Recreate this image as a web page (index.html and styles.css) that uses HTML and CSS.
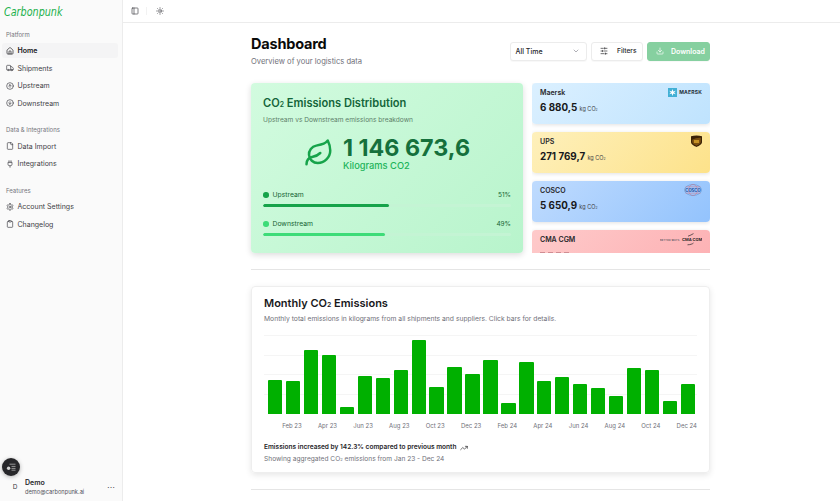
FILE: index.html
```html
<!DOCTYPE html>
<html lang="en">
<head>
    <meta charset="UTF-8">
    <meta name="viewport" content="width=device-width, initial-scale=1.0">
    <title>Carbonpunk Dashboard</title>
    <link rel="stylesheet" href="styles.css">
</head>
<body>
    <svg class="sprite" width="0" height="0">
        <symbol id="i-home" viewBox="0 0 24 24"><path d="M15 21v-8a1 1 0 0 0-1-1h-4a1 1 0 0 0-1 1v8"/><path d="M3 10a2 2 0 0 1 .709-1.528l7-5.999a2 2 0 0 1 2.582 0l7 5.999A2 2 0 0 1 21 10v9a2 2 0 0 1-2 2H5a2 2 0 0 1-2-2z"/></symbol>
        <symbol id="i-truck" viewBox="0 0 24 24"><path d="M14 18V6a2 2 0 0 0-2-2H4a2 2 0 0 0-2 2v11a1 1 0 0 0 1 1h2"/><path d="M15 18H9"/><path d="M19 18h2a1 1 0 0 0 1-1v-3.65a1 1 0 0 0-.22-.624l-3.48-4.35A1 1 0 0 0 17.52 8H14"/><circle cx="17" cy="18" r="2"/><circle cx="7" cy="18" r="2"/></symbol>
        <symbol id="i-up" viewBox="0 0 24 24"><circle cx="12" cy="12" r="10"/><path d="m16 12-4-4-4 4"/><path d="M12 16V8"/></symbol>
        <symbol id="i-down" viewBox="0 0 24 24"><circle cx="12" cy="12" r="10"/><path d="m8 12 4 4 4-4"/><path d="M12 8v8"/></symbol>
        <symbol id="i-file" viewBox="0 0 24 24"><path d="M15 2H6a2 2 0 0 0-2 2v16a2 2 0 0 0 2 2h12a2 2 0 0 0 2-2V7Z"/><path d="M14 2v4a2 2 0 0 0 2 2h4"/></symbol>
        <symbol id="i-plug" viewBox="0 0 24 24"><path d="M12 22v-5"/><path d="M9 8V2"/><path d="M15 8V2"/><path d="M18 8v5a4 4 0 0 1-4 4h-4a4 4 0 0 1-4-4V8Z"/></symbol>
        <symbol id="i-settings" viewBox="0 0 24 24"><path d="M12.22 2h-.44a2 2 0 0 0-2 2v.18a2 2 0 0 1-1 1.73l-.43.25a2 2 0 0 1-2 0l-.15-.08a2 2 0 0 0-2.73.73l-.22.38a2 2 0 0 0 .73 2.73l.15.1a2 2 0 0 1 1 1.72v.51a2 2 0 0 1-1 1.74l-.15.09a2 2 0 0 0-.73 2.73l.22.38a2 2 0 0 0 2.73.73l.15-.08a2 2 0 0 1 2 0l.43.25a2 2 0 0 1 1 1.73V20a2 2 0 0 0 2 2h.44a2 2 0 0 0 2-2v-.18a2 2 0 0 1 1-1.73l.43-.25a2 2 0 0 1 2 0l.15.08a2 2 0 0 0 2.73-.73l.22-.39a2 2 0 0 0-.73-2.73l-.15-.08a2 2 0 0 1-1-1.74v-.5a2 2 0 0 1 1-1.74l.15-.09a2 2 0 0 0 .73-2.73l-.22-.38a2 2 0 0 0-2.73-.73l-.15.08a2 2 0 0 1-2 0l-.43-.25a2 2 0 0 1-1-1.73V4a2 2 0 0 0-2-2z"/><circle cx="12" cy="12" r="3"/></symbol>
        <symbol id="i-clipboard" viewBox="0 0 24 24"><rect x="8" y="2" width="8" height="4" rx="1"/><path d="M16 4h2a2 2 0 0 1 2 2v14a2 2 0 0 1-2 2H6a2 2 0 0 1-2-2V6a2 2 0 0 1 2-2h2"/></symbol>
        <symbol id="i-panel" viewBox="0 0 24 24"><rect x="3" y="3" width="18" height="18" rx="2"/><path d="M9 3v18"/></symbol>
        <symbol id="i-sun" viewBox="0 0 24 24"><circle cx="12" cy="12" r="4"/><path d="M12 2v2M12 20v2M4.93 4.93l1.41 1.41M17.66 17.66l1.41 1.41M2 12h2M20 12h2M6.34 17.66l-1.41 1.41M19.07 4.93l-1.41 1.41"/></symbol>
        <symbol id="i-sliders" viewBox="0 0 24 24"><path d="M21 4h-7M10 4H3M21 12h-9M8 12H3M21 20h-5M12 20H3M14 2v4M8 10v4M16 18v4"/></symbol>
        <symbol id="i-download" viewBox="0 0 24 24"><path d="M21 15v4a2 2 0 0 1-2 2H5a2 2 0 0 1-2-2v-4"/><path d="m7 10 5 5 5-5"/><path d="M12 15V3"/></symbol>
        <symbol id="i-chevron" viewBox="0 0 24 24"><path d="m6 9 6 6 6-6"/></symbol>
        <symbol id="i-leaf" viewBox="0 0 24 24"><path d="M11 20A7 7 0 0 1 9.8 6.1C15.5 5 17 4.48 19 2c1 2 2 4.18 2 8 0 5.5-4.78 10-10 10Z"/><path d="M2 21c0-3 1.85-5.36 5.08-6C9.5 14.52 12 13 13 12"/></symbol>
        <symbol id="i-trend" viewBox="0 0 24 24"><path d="M22 7l-8.5 8.5-5-5L2 17"/><path d="M16 7h6v6"/></symbol>
    </svg>

    <div class="app">
        <aside class="sidebar">
            <div class="logo"><span>Carbonpunk</span></div>

            <div class="nav-label">Platform</div>
            <a class="nav-item active"><svg class="icon"><use href="#i-home"/></svg>Home</a>
            <a class="nav-item"><svg class="icon"><use href="#i-truck"/></svg>Shipments</a>
            <a class="nav-item"><svg class="icon"><use href="#i-up"/></svg>Upstream</a>
            <a class="nav-item"><svg class="icon"><use href="#i-down"/></svg>Downstream</a>

            <div class="nav-label spaced">Data &amp; Integrations</div>
            <a class="nav-item"><svg class="icon"><use href="#i-file"/></svg>Data Import</a>
            <a class="nav-item"><svg class="icon"><use href="#i-plug"/></svg>Integrations</a>

            <div class="nav-label spaced">Features</div>
            <a class="nav-item"><svg class="icon"><use href="#i-settings"/></svg>Account Settings</a>
            <a class="nav-item"><svg class="icon"><use href="#i-clipboard"/></svg>Changelog</a>

            <div class="user">
                <div class="avatar">D</div>
                <div class="user-info">
                    <div class="user-name">Demo</div>
                    <div class="user-mail">demo@carbonpunk.ai</div>
                </div>
                <div class="user-more">&#8943;</div>
            </div>
        </aside>

        <div class="float-btn">
            <svg width="10" height="8" viewBox="0 0 10 8"><circle cx="2.6" cy="5.2" r="1.7" fill="#d4d4d4"/><path d="M3.5 1.2h6M5.5 3.4h4M5.5 5.4h4M5.5 7.2h4" stroke="#a3a3a3" stroke-width="0.9"/></svg>
        </div>

        <div class="content">
            <header class="topbar">
                <svg class="icon top-icon"><use href="#i-panel"/></svg>
                <span class="top-sep"></span>
                <svg class="icon top-icon"><use href="#i-sun"/></svg>
            </header>

            <main class="main">
                <div class="page-head">
                    <div>
                        <h1>Dashboard</h1>
                        <p class="page-sub">Overview of your logistics data</p>
                    </div>
                    <div class="actions">
                        <div class="btn select">All Time<svg class="icon chevron"><use href="#i-chevron"/></svg></div>
                        <div class="btn filters"><svg class="icon"><use href="#i-sliders"/></svg>Filters</div>
                        <div class="btn download"><svg class="icon"><use href="#i-download"/></svg>Download</div>
                    </div>
                </div>

                <section class="summary">
                    <div class="dist-card">
                        <h2>CO<sub>2</sub> Emissions Distribution</h2>
                        <p class="dist-sub">Upstream vs Downstream emissions breakdown</p>
                        <div class="total">
                            <svg class="leaf"><use href="#i-leaf"/></svg>
                            <div>
                                <div class="total-num">1 146 673,6</div>
                                <div class="total-unit">Kilograms CO2</div>
                            </div>
                        </div>
                        <div class="split">
                            <div class="split-row"><span class="dot dark"></span>Upstream<span class="pct">51%</span></div>
                            <div class="track"><div class="fill dark" style="width:51%"></div></div>
                        </div>
                        <div class="split">
                            <div class="split-row"><span class="dot light"></span>Downstream<span class="pct">49%</span></div>
                            <div class="track"><div class="fill light" style="width:49%"></div></div>
                        </div>
                    </div>

                    <div class="carriers">
                        <div class="carrier maersk">
                            <div class="carrier-top">
                                <span>Maersk</span>
                                <span class="logo-maersk">
                                    <svg width="9" height="9" viewBox="0 0 9 9"><rect width="9" height="9" fill="#42b0d5"/><path d="M4.5 1l.8 2.5 2.5-.7-1.7 1.7 1.7 1.7-2.5-.7L4.5 8l-.8-2.5-2.5.7 1.7-1.7-1.700-1.700 2.500.7z" fill="#fff"/></svg>
                                    MAERSK
                                </span>
                            </div>
                            <div class="carrier-val">6 880,5 <small>kg CO<sub>2</sub></small></div>
                        </div>
                        <div class="carrier ups">
                            <div class="carrier-top">
                                <span>UPS</span>
                                <svg class="logo-img" width="11" height="12" viewBox="0 0 11 12"><path d="M0 1.2C3.5 .1 7.5 .1 11 1.2V7c0 2.500-3.500 4-5.500 5C3.500 11 0 9.500 0 7z" fill="#3b2207"/><path d="M1.2 4.800C4 3 7.500 2.400 9.800 2.800V7c0 1.500-2.800 3-4.300 3.800C4 10 1.200 8.500 1.200 7z" fill="#7a4f10"/><path d="M3 5h5v3H3z" fill="#d9a22b" opacity=".8"/></svg>
                            </div>
                            <div class="carrier-val">271 769,7 <small>kg CO<sub>2</sub></small></div>
                        </div>
                        <div class="carrier cosco">
                            <div class="carrier-top">
                                <span>COSCO</span>
                                <svg class="logo-img" width="18" height="12" viewBox="0 0 18 12"><ellipse cx="9" cy="6" rx="8.500" ry="5.500" fill="none" stroke="#5b8cc9" stroke-width=".5"/><ellipse cx="9" cy="6" rx="4.500" ry="5.500" fill="none" stroke="#e0606a" stroke-width=".4"/><path d="M1.500 2.800h15M1.500 9.200h15" stroke="#e0606a" stroke-width=".4"/><text x="9" y="7.600" class="cosco-text">COSCO</text></svg>
                            </div>
                            <div class="carrier-val">5 650,9 <small>kg CO<sub>2</sub></small></div>
                        </div>
                        <div class="carrier cma">
                            <div class="carrier-top">
                                <span>CMA CGM</span>
                                <svg class="logo-img" width="42" height="13" viewBox="0 0 42 13"><text x="0" y="7.500" class="cma-tag">BETTER WAYS</text><text x="22" y="8" class="cma-name">CMA CGM</text><path d="M28 3.200C30 2.600 32 1.500 33.500 .6M27.500 11.800C30 11.800 32.500 11 33.500 10" fill="none" stroke="#27272a" stroke-width=".7"/></svg>
                            </div>
                            <div class="val-clip"></div>
                        </div>
                    </div>
                </section>

                <hr class="rule">

                <section class="chart-card">
                    <h2>Monthly CO<sub>2</sub> Emissions</h2>
                    <p class="chart-sub">Monthly total emissions in kilograms from all shipments and suppliers. Click bars for details.</p>
                    <div class="plot">
                        <div class="grid-lines"><i></i><i></i><i></i><i></i></div>
                        <div class="bars">
                            <div class="bar" style="height:34.3px"></div>
                            <div class="bar" style="height:33px"></div>
                            <div class="bar" style="height:64.3px"></div>
                            <div class="bar" style="height:59px"></div>
                            <div class="bar" style="height:7.3px"></div>
                            <div class="bar" style="height:38px"></div>
                            <div class="bar" style="height:36px"></div>
                            <div class="bar" style="height:44px"></div>
                            <div class="bar" style="height:74px"></div>
                            <div class="bar" style="height:27.3px"></div>
                            <div class="bar" style="height:46.7px"></div>
                            <div class="bar" style="height:39.7px"></div>
                            <div class="bar" style="height:54.3px"></div>
                            <div class="bar" style="height:10.7px"></div>
                            <div class="bar" style="height:51.7px"></div>
                            <div class="bar" style="height:32.7px"></div>
                            <div class="bar" style="height:36.7px"></div>
                            <div class="bar" style="height:30px"></div>
                            <div class="bar" style="height:26.3px"></div>
                            <div class="bar" style="height:18px"></div>
                            <div class="bar" style="height:46.3px"></div>
                            <div class="bar" style="height:43.7px"></div>
                            <div class="bar" style="height:12.7px"></div>
                            <div class="bar" style="height:30.3px"></div>
                        </div>
                    </div>
                    <div class="months">
                        <span></span><span>Feb 23</span><span></span><span>Apr 23</span><span></span><span>Jun 23</span>
                        <span></span><span>Aug 23</span><span></span><span>Oct 23</span><span></span><span>Dec 23</span>
                        <span></span><span>Feb 24</span><span></span><span>Apr 24</span><span></span><span>Jun 24</span>
                        <span></span><span>Aug 24</span><span></span><span>Oct 24</span><span></span><span>Dec 24</span>
                    </div>
                    <div class="trend">Emissions increased by 142.3% compared to previous month <svg class="icon"><use href="#i-trend"/></svg></div>
                    <div class="chart-note">Showing aggregated CO<sub>2</sub> emissions from Jan 23 - Dec 24</div>
                </section>

                <hr class="rule">
            </main>
        </div>
    </div>
</body>
</html>
```

FILE: styles.css
```css
* {
    margin: 0;
    padding: 0;
    box-sizing: border-box;
}

html, body {
    height: 100%;
    overflow: hidden;
    background: #fff;
    color: #0a0a0a;
    font-family: Inter, "Liberation Sans", sans-serif;
}

.sprite {
    position: absolute;
}

.icon {
    width: 8px;
    height: 8px;
    fill: none;
    stroke: currentColor;
    stroke-width: 2;
    stroke-linecap: round;
    stroke-linejoin: round;
    flex: none;
}

.app {
    display: flex;
    height: 501px;
    position: relative;
}

/* sidebar */
.sidebar {
    width: 123px;
    flex: none;
    background: #fafafa;
    border-right: 1px solid #ececec;
    padding: 0 4px 0 2px;
    display: flex;
    flex-direction: column;
}

.logo {
    height: 24px;
    padding-left: 2px;
    color: #22b14c;
    font: italic 400 13px/23px "DejaVu Sans", sans-serif;
    white-space: nowrap;
}

.logo span {
    display: inline-block;
    transform: scaleX(0.74);
    transform-origin: left center;
}

.nav-label {
    height: 14px;
    margin-top: 3.5px;
    margin-bottom: 1.5px;
    padding-left: 4px;
    font-size: 6px;
    line-height: 14px;
    color: #75757c;
}

.nav-label.spaced {
    margin-top: 10px;
}

.nav-item {
    height: 15px;
    margin-bottom: 2.5px;
    padding-left: 4px;
    border-radius: 3px;
    display: flex;
    align-items: center;
    gap: 3.5px;
    font-size: 7px;
    color: #3f3f46;
}

.nav-item.active {
    background: #f4f4f5;
    color: #18181b;
    font-weight: 600;
}

.user {
    margin-top: auto;
    height: 28px;
    display: flex;
    align-items: center;
    padding: 0 3px 0 6px;
}

.avatar {
    width: 14px;
    font-size: 6.5px;
    color: #3f3f46;
    text-align: center;
    margin-right: 3px;
}

.user-name {
    font-size: 7px;
    font-weight: 600;
    color: #27272a;
    line-height: 9px;
}

.user-mail {
    font-size: 5.7px;
    color: #52525b;
    line-height: 9px;
}

.user-more {
    margin-left: auto;
    font-size: 8px;
    color: #3f3f46;
}

.float-btn {
    position: absolute;
    left: 2px;
    top: 458px;
    width: 18px;
    height: 18px;
    border-radius: 50%;
    background: #27272a;
    box-shadow: 0 1px 4px rgba(0, 0, 0, 0.3);
    display: flex;
    align-items: center;
    justify-content: center;
}

/* top bar */
.content {
    flex: 1;
    min-width: 0;
    display: flex;
    flex-direction: column;
}

.topbar {
    height: 23px;
    flex: none;
    border-bottom: 1px solid #ececec;
    display: flex;
    align-items: center;
    padding-left: 8px;
    color: #3f3f46;
}

.top-sep {
    width: 1px;
    height: 8px;
    background: #f2f2f2;
    margin: 0 8.5px 0 7px;
}

/* page */
.main {
    width: 459px;
    margin-left: 128px;
    padding-top: 3px;
    flex: none;
}

.page-head {
    height: 57px;
    padding-top: 8.5px;
    display: flex;
    justify-content: space-between;
    align-items: flex-start;
}

h1 {
    font-size: 14.5px;
    font-weight: 700;
    line-height: 17px;
    letter-spacing: -0.2px;
}

.page-sub {
    margin-top: 5.5px;
    font-size: 7.6px;
    color: #71717a;
}

.actions {
    display: flex;
    gap: 4px;
    margin-top: 7px;
}

.btn {
    height: 19px;
    border: 1px solid #ececec;
    border-radius: 3px;
    display: flex;
    align-items: center;
    font-size: 7px;
    font-weight: 500;
    color: #27272a;
    background: #fff;
    box-shadow: 0 1px 1px rgba(0, 0, 0, 0.03);
}

.select {
    width: 77.5px;
    padding: 0 6px 0 5px;
    justify-content: space-between;
}

.chevron {
    color: #8a8a92;
}

.filters {
    width: 52px;
    padding-left: 8px;
    gap: 9px;
    font-size: 6.6px;
}

.download {
    width: 63px;
    padding-left: 8px;
    gap: 7px;
    font-weight: 600;
    color: #fff;
    background: #86d0a0;
    border-color: #86d0a0;
}

.summary {
    display: flex;
    gap: 9px;
    height: 170px;
}

.dist-card {
    width: 272px;
    flex: none;
    padding: 13px 12px 0;
    border-radius: 4px;
    background: linear-gradient(135deg, #d2fbdf, #b8f4cc);
    box-shadow: 0 2px 6px rgba(0, 0, 0, 0.14);
}

.dist-card h2 {
    font-size: 11.1px;
    font-weight: 600;
    line-height: 15px;
    color: #14653a;
}

sub {
    font-size: 0.62em;
    vertical-align: baseline;
}

.dist-sub {
    margin-top: 3.5px;
    font-size: 6.6px;
    color: #5d7f6a;
}

.total {
    display: flex;
    align-items: center;
    justify-content: center;
    gap: 9px;
    margin-top: 5.5px;
    height: 48px;
}

.leaf {
    width: 30px;
    height: 30px;
    fill: none;
    stroke: #16a34a;
    stroke-width: 2;
    stroke-linecap: round;
    stroke-linejoin: round;
}

.total-num {
    font-size: 23.3px;
    font-weight: 700;
    line-height: 25px;
    color: #15703c;
}

.total-unit {
    font-size: 9.3px;
    font-weight: 500;
    line-height: 12px;
    color: #22b45a;
}

.split {
    margin-top: 13px;
}

.split + .split {
    margin-top: 12.5px;
}

.split-row {
    display: flex;
    align-items: center;
    font-size: 6.8px;
    line-height: 10px;
    color: #166534;
    margin-bottom: 3.5px;
}

.dot {
    width: 5.5px;
    height: 5.5px;
    border-radius: 50%;
    margin-right: 4px;
}

.dark {
    background: #16a34a;
}

.light {
    background: #3ddc78;
}

.pct {
    margin-left: auto;
    font-size: 6.5px;
}

.track {
    height: 3px;
    border-radius: 2px;
    background: #c4f4d4;
    overflow: hidden;
}

.fill {
    height: 100%;
    border-radius: 2px;
}

.carriers {
    flex: 1;
    display: flex;
    flex-direction: column;
    gap: 8.5px;
    overflow: hidden;
}

.carrier {
    flex: none;
    height: 40.5px;
    padding: 2.5px 8px 0;
    border-radius: 4px;
    box-shadow: 0 1px 4px rgba(0, 0, 0, 0.12);
}

.maersk {
    background: linear-gradient(135deg, #dbf0ff, #bfe3fe);
}

.ups {
    background: linear-gradient(135deg, #fef0bb, #fde28a);
}

.cosco {
    background: linear-gradient(135deg, #bfdbfe, #93c3fd);
}

.cma {
    background: linear-gradient(135deg, #fecaca, #fdb0b3);
}

.carrier-top {
    height: 13px;
    display: flex;
    justify-content: space-between;
    align-items: center;
    font-size: 7px;
    font-weight: 600;
    color: #27272a;
}

.logo-maersk {
    display: flex;
    align-items: center;
    gap: 2.5px;
    font-size: 5px;
    font-weight: 700;
    letter-spacing: 0.2px;
    color: #1f2f3a;
}

.logo-img {
    display: block;
}

.cosco-text {
    font-size: 4.2px;
    font-weight: 700;
    fill: #1f4f9c;
    text-anchor: middle;
}

.cma-tag {
    font-size: 2.4px;
    letter-spacing: 0.25px;
    fill: #52525b;
}

.cma-name {
    font-size: 4px;
    font-weight: 700;
    fill: #1f1f25;
}

.carrier-val {
    margin-top: 2px;
    font-size: 9.8px;
    font-weight: 700;
    line-height: 14px;
    color: #18181b;
}

.carrier-val small {
    font-size: 5.5px;
    font-weight: 400;
    color: #3f3f46;
}

/* tops of the value row, the rest is scrolled out of the box */
.val-clip {
    width: 32px;
    height: 1px;
    margin-top: 6px;
    background: repeating-linear-gradient(90deg, #d08d92 0 5px, transparent 5px 8px);
}

.rule {
    border: 0;
    border-top: 1px solid #e5e5e5;
    margin-top: 16px;
}

.chart-card {
    margin-top: 16px;
    height: 187px;
    border: 1px solid #eeeeee;
    border-radius: 4px;
    box-shadow: 0 2px 6px rgba(0, 0, 0, 0.1);
    padding: 9px 12px 0;
}

.chart-card h2 {
    font-size: 11px;
    font-weight: 600;
    line-height: 14px;
    color: #18181b;
}

.chart-sub {
    margin-top: 2px;
    font-size: 6.75px;
    color: #71717a;
}

.plot {
    position: relative;
    height: 79px;
    margin-top: 12px;
}

.grid-lines {
    position: absolute;
    inset: 0;
    display: flex;
    flex-direction: column;
}

.grid-lines i {
    height: 19.5px;
    border-top: 1px solid #f5f5f5;
}

.bars {
    position: absolute;
    inset: 0;
    padding-left: 2px;
    display: grid;
    grid-template-columns: repeat(24, 1fr);
    align-items: end;
}

.bar {
    margin: 0 1.85px;
    background: #00b000;
    border-radius: 1px 1px 0 0;
}

.months {
    display: grid;
    grid-template-columns: repeat(24, 1fr);
    padding-left: 2px;
    margin-top: 8px;
    font-size: 6px;
    line-height: 8px;
    color: #71717a;
}

.months span {
    white-space: nowrap;
    display: flex;
    justify-content: center;
}

.trend {
    margin-top: 13px;
    display: flex;
    align-items: center;
    gap: 4px;
    font-size: 6.55px;
    font-weight: 600;
    line-height: 9px;
    color: #27272a;
}

.chart-note {
    margin-top: 3px;
    font-size: 6.6px;
    line-height: 9px;
    color: #71717a;
}
```
